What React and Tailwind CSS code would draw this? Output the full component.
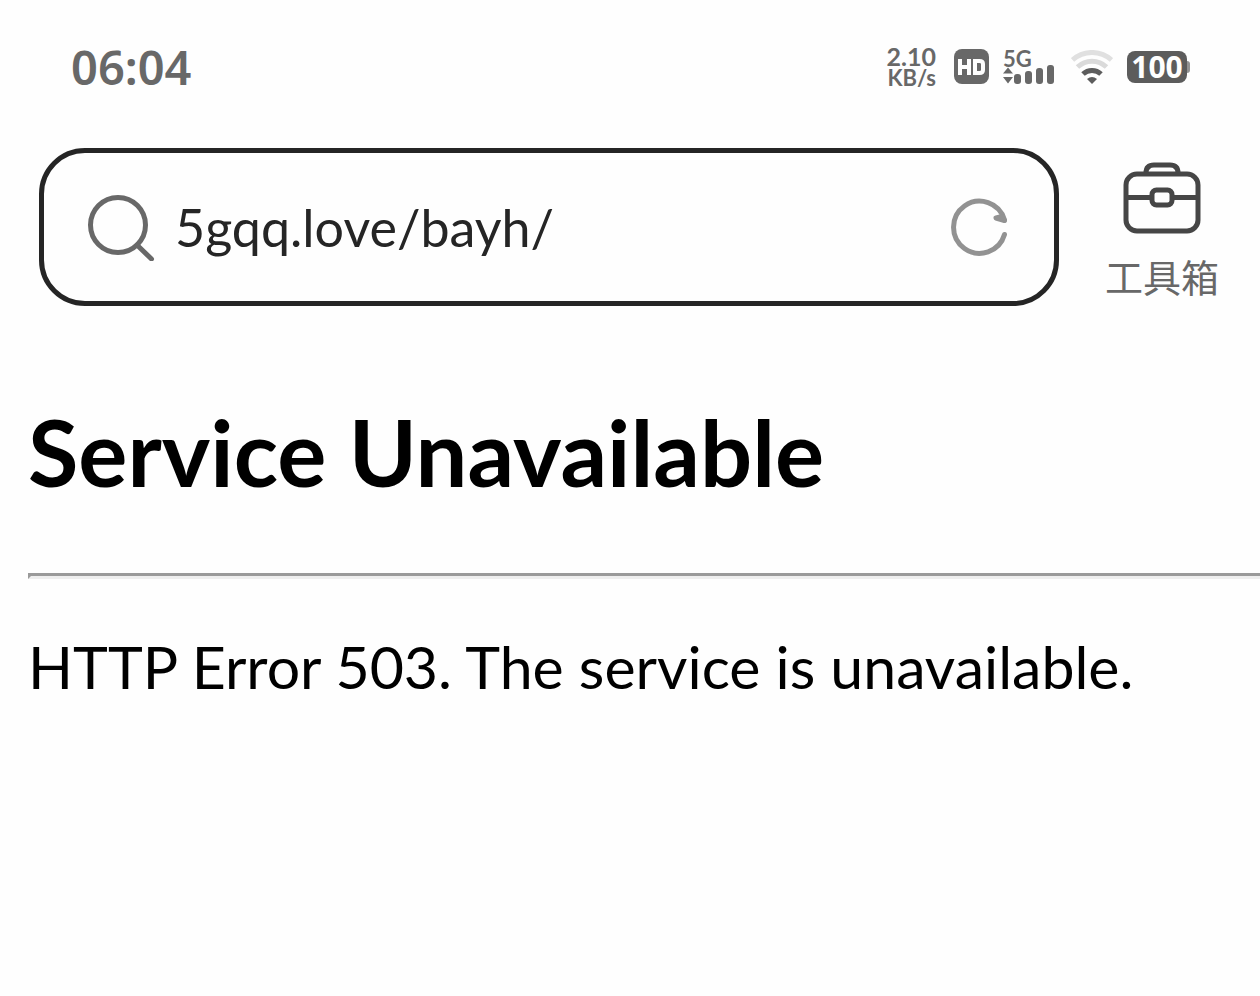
import React, { useState } from 'react';

const SearchIcon = () => (
  <svg width="68" height="68" viewBox="0 0 68 68" fill="none" stroke="#686868" strokeWidth="5" className="shrink-0" aria-hidden="true">
    <circle cx="31" cy="32" r="27.5" />
    <path d="M50 52 L64.500 66" strokeLinecap="round" />
  </svg>
);

const ReloadIcon = () => (
  <svg width="58" height="58" viewBox="0 0 58 58" fill="none" stroke="#929292" strokeWidth="5" strokeLinecap="round" strokeLinejoin="round" aria-hidden="true">
    <path d="M53.500 36.500 A26 26 0 1 1 53.500 22" />
    <path d="M45 20 L53.500 22.500 L51 18.500 Z" fill="#929292" />
  </svg>
);

const ToolboxIcon = () => (
  <svg width="78" height="72" viewBox="0 0 78 72" fill="none" stroke="#464646" strokeWidth="5" aria-hidden="true">
    <path d="M23 11 C23 5.500 26 3 31 3 H47 C52 3 55 5.500 55 11" />
    <rect x="3" y="12" width="72" height="57" rx="11" />
    <path d="M3 35.500 H28 M50 35.500 H75" />
    <rect x="29" y="28" width="20" height="15" rx="4.500" />
  </svg>
);

const HdIcon = () => (
  <svg width="36" height="36" viewBox="0 0 36 36" role="img" aria-label="HD">
    <rect x="0" y="0" width="35" height="35" rx="8" fill="#686868" />
    <g fill="none" stroke="#fefefe" strokeWidth="4">
      <path d="M6 10 V26 M15 10 V26 M6 18 H15" />
      <path d="M21 12 H25.500 C28 12 29 13.500 29 15 V21 C29 22.500 28 24 25.500 24 H21 Z" />
    </g>
  </svg>
);

const SignalIcon = () => (
  <div className="relative h-9 w-[52px]">
    <span className="absolute left-0 top-0 text-[22px] leading-5 font-bold">5G</span>
    <svg width="52" height="36" viewBox="0 0 52 36" fill="#686868" aria-hidden="true">
      <path d="M0 24.500 L5 18.500 L10 24.500 Z M0 28 L5 34.500 L10 28 Z" />
      <rect x="11" y="25" width="7" height="10" rx="3" />
      <rect x="22" y="22" width="7" height="13" rx="3" />
      <rect x="33" y="19" width="7" height="16" rx="3" />
      <rect x="44" y="16" width="7" height="19" rx="3" />
    </svg>
  </div>
);

const WifiIcon = () => (
  <svg width="42" height="34" viewBox="0 0 42 34" fill="none" strokeWidth="5" aria-hidden="true">
    <path d="M1.500 10 A29 29 0 0 1 40.500 10" stroke="#e0e0e0" />
    <path d="M6.500 17 A21 21 0 0 1 35.500 17" stroke="#dadada" />
    <path d="M12 24 A13 13 0 0 1 30 24" stroke="#5c5c5c" />
    <path d="M16 29 Q21 25 26 29 L21 34 Z" fill="#5c5c5c" />
  </svg>
);

const StatusBar = () => (
  <div className="flex items-center justify-between pt-[45px] pl-[71px] pr-[70px] text-[#686868]">
    <time className="text-[47px] leading-10 font-semibold font-['Noto_Sans',sans-serif]">06:04</time>
    <div className="flex items-center">
      <div className="mr-[18px] text-right font-bold">
        <div className="text-[25px] leading-[22px]">2.10</div>
        <div className="text-[22px] leading-[22px]">KB/s</div>
      </div>
      <div className="mr-[13px]"><HdIcon /></div>
      <div className="mr-4"><SignalIcon /></div>
      <div className="mr-[14px]"><WifiIcon /></div>
      <div className="flex items-center">
        <span className="flex h-8 w-[60px] items-center justify-center rounded-lg bg-[#5c5c5c] text-[30px] leading-8 font-bold font-['Noto_Sans',sans-serif] text-[#fefefe]">100</span>
        <span className="h-3 w-[3px] rounded-r bg-[#929292]" />
      </div>
    </div>
  </div>
);

export default function App() {
  const [url, setUrl] = useState('5gqq.love/bayh/');

  return (
    <div className="min-h-screen bg-[#fefefe] font-['Lato','Noto_Sans_CJK_SC',sans-serif]">
      <StatusBar />

      {/* Address bar */}
      <header className="flex items-start pt-[59px] px-[39px]">
        <form
          onSubmit={(e) => e.preventDefault()}
          className="flex h-[158px] min-w-0 flex-1 items-center rounded-[46px] border-5 border-[#252525] pl-[43px] pr-[45px]"
        >
          <SearchIcon />
          <input
            type="text"
            aria-label="URL"
            value={url}
            onChange={(e) => setUrl(e.target.value)}
            className="ml-5 min-w-0 flex-1 bg-transparent text-[52px] leading-[72px] text-[#252525] outline-none"
          />
          <button type="submit" aria-label="Reload" className="shrink-0">
            <ReloadIcon />
          </button>
        </form>
        <button type="button" className="ml-11 mt-[14px] flex w-[118px] shrink-0 flex-col items-center text-[#686868]">
          <ToolboxIcon />
          <span className="mt-4 text-[38px] leading-[52px] font-['Noto_Sans_CJK_SC',sans-serif]">工具箱</span>
        </button>
      </header>

      {/* Page content */}
      <main className="pt-[92px] pl-7 text-black">
        <h1 className="text-[92px] leading-[108px] font-bold">Service Unavailable</h1>
        <hr className="mt-[67px] h-[6px] border-t-3 border-b-3 border-l-3 border-t-[#9a9a9a] border-b-[#eeeeee] border-l-[#9a9a9a]" />
        <p className="mt-[52px] pr-7 text-[59px] leading-[72px]">HTTP Error 503. The service is unavailable.</p>
      </main>
    </div>
  );
}
